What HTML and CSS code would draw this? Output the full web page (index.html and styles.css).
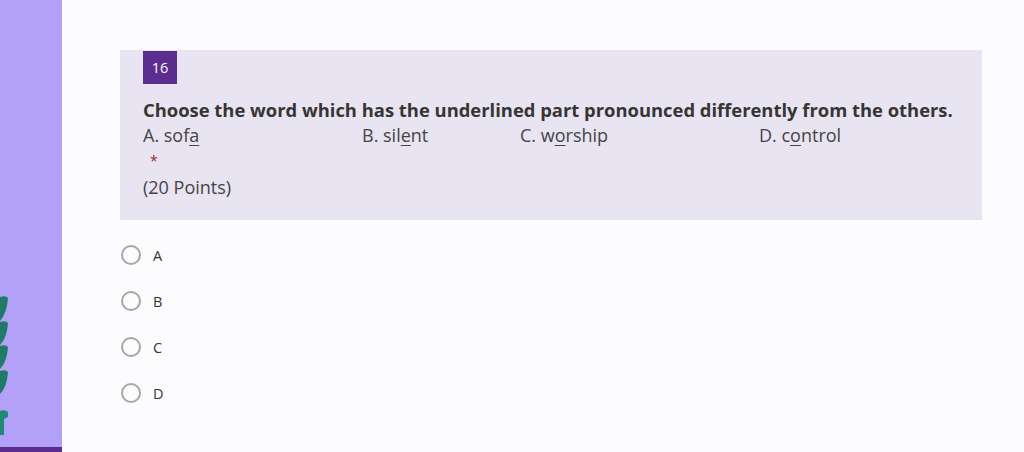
FILE: index.html
```html
<!DOCTYPE html>
<html>
<head>
<meta charset="utf-8">
<link rel="stylesheet" href="styles.css">
</head>
<body>
<div class="page">
  <aside class="sidebar">
    <svg class="leaves" width="12" height="140" viewBox="0 0 12 140">
      <path d="M0 2 Q6 0 8 3 Q7 18 0 26 Z" fill="#1f7a68"/>
      <path d="M0 27 Q6 25 8 28 Q7 43 0 50 Z" fill="#1f7a68"/>
      <path d="M0 51 Q6 49 8 52 Q7 67 0 74 Z" fill="#1f7a68"/>
      <path d="M0 76 Q6 74 8 77 Q7 92 0 99 Z" fill="#1f7a68"/>
      <path d="M0 116 Q5 114 8 117 L8 122 L4 124 L4 140 L0 140 Z" fill="#1f8a78"/>
    </svg>
    <div class="sidebar-bar"></div>
  </aside>
  <main class="main">
    <section class="question">
      <div class="badge">16</div>
      <div class="title">Choose the word which has the underlined part pronounced differently from the others.</div>
      <div class="choices">
        <span class="c1">A. sof<u>a</u></span>
        <span class="c2">B. sil<u>e</u>nt</span>
        <span class="c3">C. w<u>o</u>rship</span>
        <span class="c4">D. c<u>o</u>ntrol</span>
      </div>
      <div class="req">*</div>
      <div class="points">(20 Points)</div>
    </section>
    <ul class="options">
      <li><span class="radio"></span><span class="lbl">A</span></li>
      <li><span class="radio"></span><span class="lbl">B</span></li>
      <li><span class="radio"></span><span class="lbl">C</span></li>
      <li><span class="radio"></span><span class="lbl">D</span></li>
    </ul>
  </main>
</div>
</body>
</html>
```
FILE: styles.css
```css
html, body {
  margin: 0;
  padding: 0;
  height: 452px;
  overflow: hidden;
  background: #fcfcfe;
  font-family: "Open Sans", "Noto Sans", sans-serif;
}
.page {
  display: flex;
  height: 452px;
}
.sidebar {
  width: 62px;
  flex: none;
  background: #b3a0f8;
  display: flex;
  flex-direction: column;
  justify-content: flex-end;
}
.leaves {
  display: block;
  margin-bottom: 12px;
}
.sidebar-bar {
  height: 5px;
  background: #5a2c90;
}
.main {
  flex: 1;
  padding: 50px 42px 0 58px;
}
.question {
  background: #e8e4f1;
  padding: 1px 23px 0;
  height: 170px;
  box-sizing: border-box;
}
.badge {
  display: inline-block;
  width: 34px;
  height: 33px;
  background: #5c2d91;
  color: #fff;
  font-size: 14.5px;
  line-height: 33px;
  text-align: center;
}
.title {
  margin-top: 13px;
  font-weight: 700;
  font-size: 18.4px;
  color: #363534;
  line-height: 26px;
}
.choices {
  display: flex;
  font-size: 18px;
  color: #444;
  line-height: 25px;
}
.choices u {
  text-underline-offset: 3px;
}
.c1 { width: 219px; }
.c2 { width: 158px; }
.c3 { width: 239px; }
.req {
  color: #a4262c;
  font-size: 14px;
  padding-left: 7px;
  padding-top: 2px;
  line-height: 22px;
}
.points {
  font-size: 18px;
  color: #444;
  line-height: 28px;
  margin-top: 1px;
}
.options {
  list-style: none;
  margin: 12px 0 0 0;
  padding: 0;
}
.options li {
  display: flex;
  align-items: center;
  height: 46px;
  margin-left: 1px;
}
.radio {
  width: 16px;
  height: 16px;
  border: 2px solid #a6a6a6;
  border-radius: 50%;
  flex: none;
}
.lbl {
  margin-left: 12px;
  font-size: 14.5px;
  color: #333;
}
```
